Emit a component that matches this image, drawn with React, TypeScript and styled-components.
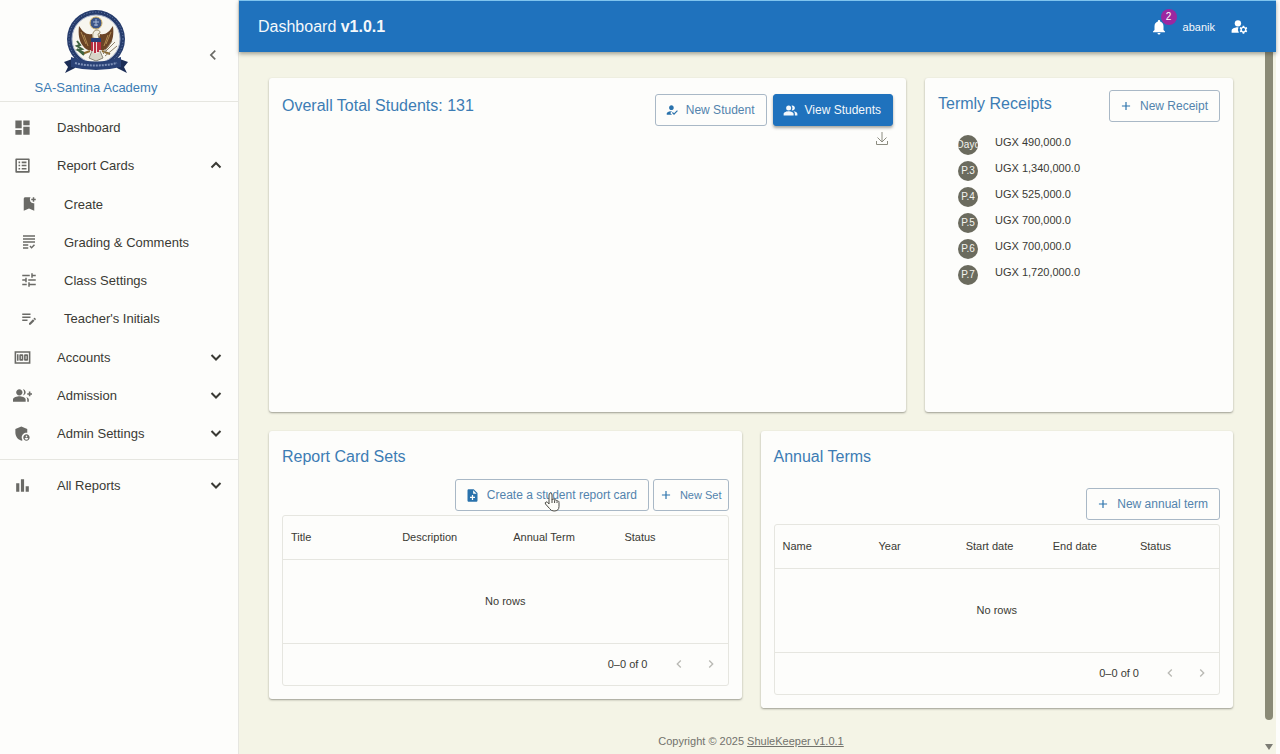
import React from "react";
import styled, { createGlobalStyle } from "styled-components";
import {
  MdAdd,
  MdAdminPanelSettings,
  MdBarChart,
  MdBookmarkAdd,
  MdChevronLeft,
  MdChevronRight,
  MdDashboard,
  MdEditNote,
  MdGrading,
  MdGroupAdd,
  MdHowToReg,
  MdListAlt,
  MdManageAccounts,
  MdMoney,
  MdNoteAdd,
  MdNotifications,
  MdPeopleAlt,
  MdTune,
} from "react-icons/md";

const color = {
  primary: "#1f72bd",
  heading: "#3c7cb4",
  text: "#3a3a34",
  icon: "#6a6a66",
  muted: "#72726c",
  paper: "#fdfdfb",
  page: "#f4f4e6",
  line: "#e6e6e0",
  outline: "#a9b8c6",
};

const GlobalStyle = createGlobalStyle`
  *, *::before, *::after { box-sizing: border-box; }
  body {
    margin: 0;
    background: ${color.paper};
    color: ${color.text};
    font-family: "Liberation Sans", Arial, sans-serif;
    font-size: 11px;
    line-height: 16px;
  }
  button { font-family: inherit; cursor: pointer; }
  h1, h2, p, ul { margin: 0; padding: 0; }
  ul { list-style: none; }
`;

const Shell = styled.div`
  display: flex;
  min-height: 100vh;
`;

const Sidebar = styled.aside`
  flex: 0 0 239px;
  background: ${color.paper};
  border-right: 1px solid ${color.line};
`;

const Brand = styled.div`
  display: grid;
  grid-template-columns: 192px 1fr;
  align-items: center;
  height: 102px;
  border-bottom: 1px solid ${color.line};
`;

const School = styled.div`
  display: flex;
  flex-direction: column;
  align-items: center;
  gap: 6px;
  padding-top: 3px;
  font-size: 13px;
  color: ${color.heading};
`;

const IconButton = styled.button<{ $tone?: string }>`
  display: inline-flex;
  align-items: center;
  justify-content: center;
  padding: 0;
  border: 0;
  background: none;
  color: ${(p) => p.$tone ?? color.icon};
`;

const CollapseButton = styled(IconButton)`
  width: 42px;
  height: 32px;
  margin-top: 8px;
`;

const NavList = styled.ul`
  padding: 6px 0 7px;
  & + & {
    border-top: 1px solid ${color.line};
  }
`;

const SubList = styled.ul`
  padding: 1px 0;
`;

const NavButton = styled.button<{ $nested?: boolean }>`
  display: grid;
  grid-template-columns: 42px 1fr 20px;
  align-items: center;
  width: 100%;
  height: 38px;
  padding: 0 11px 0 ${(p) => (p.$nested ? 22 : 15)}px;
  border: 0;
  background: none;
  color: ${color.text};
  font-size: 13px;
  text-align: left;
  & > svg:first-child {
    color: ${color.icon};
    justify-self: start;
    margin-left: -2px;
  }
`;

const Column = styled.div`
  flex: 1;
  display: flex;
  flex-direction: column;
  min-width: 0;
  margin-right: 4px;
`;

const AppBar = styled.header`
  position: relative;
  display: flex;
  align-items: center;
  justify-content: space-between;
  height: 52px;
  padding: 0 27px 0 19px;
  background: ${color.primary};
  color: #f4f8fb;
  border-top: 1px solid #7fc4ee;
  box-shadow: 0 2px 4px rgba(60, 60, 50, 0.45);
`;

const PageTitle = styled.h1`
  font-size: 16px;
  font-weight: 400;
  line-height: 24px;
`;

const Account = styled.div`
  display: flex;
  align-items: center;
  gap: 15px;
`;

const BellButton = styled(IconButton)`
  position: relative;
`;

const Badge = styled.span`
  position: absolute;
  top: -9px;
  right: -9px;
  width: 16px;
  height: 16px;
  border-radius: 8px;
  background: #9c27a0;
  color: #fff;
  font-size: 10px;
  line-height: 16px;
`;

const Body = styled.div`
  flex: 1;
  display: flex;
  background: ${color.page};
`;

const Content = styled.main`
  flex: 1;
  min-width: 0;
  display: flex;
  flex-direction: column;
  padding: 26px 32px 4px 30px;
`;

const Scroll = styled.div`
  display: flex;
  flex-direction: column;
  align-items: center;
  width: 11px;
  padding-right: 3px;
`;

const Thumb = styled.div`
  flex: 1;
  width: 8px;
  border-radius: 0 0 4px 4px;
  background: #8a8a76;
`;

const ScrollEnd = styled.div`
  display: flex;
  align-items: flex-end;
  height: 34px;
  padding-bottom: 4px;
`;

const Row = styled.div<{ $columns: string }>`
  display: grid;
  grid-template-columns: ${(p) => p.$columns};
  align-items: start;
  gap: 19px;
  & + & {
    margin-top: 19px;
  }
`;

const Card = styled.section<{ $minHeight?: number; $top?: number }>`
  min-width: 0;
  min-height: ${(p) => p.$minHeight ?? 0}px;
  padding: ${(p) => p.$top ?? 12}px 13px 13px;
  border-radius: 3px;
  background: ${color.paper};
  box-shadow: 0 1px 2px rgba(70, 70, 60, 0.5);
`;

const CardHead = styled.div`
  display: flex;
  align-items: flex-start;
  justify-content: space-between;
`;

const CardTitle = styled.h2`
  font-size: 16px;
  font-weight: 400;
  line-height: 28px;
  color: ${color.heading};
`;

const Actions = styled.div<{ $gap?: number; $top?: number; $bottom?: number }>`
  display: flex;
  justify-content: flex-end;
  gap: ${(p) => p.$gap ?? 4}px;
  padding: ${(p) => p.$top ?? 0}px 0 ${(p) => p.$bottom ?? 0}px;
`;

const Button = styled.button<{ $filled?: boolean; $dense?: boolean }>`
  position: relative;
  display: inline-flex;
  align-items: center;
  gap: 7px;
  height: 32px;
  padding: 0 ${(p) => (p.$dense ? 6 : 11)}px 0 ${(p) => (p.$dense ? 5 : 9)}px;
  border: 1px solid ${(p) => (p.$filled ? color.primary : color.outline)};
  border-radius: 3px;
  background: ${(p) => (p.$filled ? color.primary : "transparent")};
  box-shadow: ${(p) => (p.$filled ? "0 2px 3px rgba(60, 60, 50, 0.45)" : "none")};
  color: ${(p) => (p.$filled ? "#f4f8fb" : "#5283ad")};
  font-size: ${(p) => (p.$dense ? 11 : 12)}px;
  line-height: 20px;
  white-space: nowrap;
  & > svg {
    flex: none;
    color: ${(p) => (p.$filled ? "#f4f8fb" : "#2a72ac")};
  }
`;

const Pointer = styled.span`
  position: absolute;
  left: 88px;
  top: 12px;
  width: 16px;
  height: 20px;
`;

const Download = styled.div`
  display: flex;
  justify-content: flex-end;
  padding: 6px 4px 0 0;
`;

const Receipts = styled.ul`
  padding: 12px 0 0 20px;
`;

const Receipt = styled.li`
  display: flex;
  gap: 17px;
  height: 26px;
  font-size: 11px;
  line-height: 16px;
`;

const Avatar = styled.span`
  display: flex;
  align-items: center;
  justify-content: center;
  width: 20px;
  height: 20px;
  margin-top: 1px;
  border-radius: 50%;
  overflow: hidden;
  background: #6b6b5e;
  color: #f4f4ee;
  font-size: 10px;
`;

const Grid = styled.div`
  border: 1px solid ${color.line};
  border-radius: 3px;
`;

const Table = styled.table`
  width: 100%;
  border-collapse: collapse;
  table-layout: fixed;
`;

const HeadCell = styled.th`
  height: 43px;
  padding: 0 8px;
  border-bottom: 1px solid ${color.line};
  font-weight: 400;
  text-align: left;
`;

const EmptyCell = styled.td`
  height: 84px;
  padding: 0;
  border-bottom: 1px solid ${color.line};
  text-align: center;
`;

const Pager = styled.div`
  display: flex;
  align-items: center;
  justify-content: flex-end;
  gap: 16px;
  height: 41px;
  padding-right: 9px;
  & > span {
    margin-right: 7px;
  }
`;

const Footer = styled.footer`
  margin-top: auto;
  padding-top: 20px;
  text-align: center;
  line-height: 18px;
  color: ${color.muted};
  a {
    color: inherit;
  }
`;

const Crest = () => (
  <svg width="66" height="66" viewBox="0 0 66 66" role="img" aria-label="Academy crest">
    <circle cx="33" cy="31" r="29" fill="#263c6c" />
    <circle cx="33" cy="31" r="27" fill="none" stroke="#7289b5" strokeWidth="1" strokeDasharray="1 2" />
    <circle cx="33" cy="31" r="24" fill="#f7f6ef" stroke="#a9b4cc" />
    <path d="M29 26C23 27 20 24 16 18c-1 8 0 15 4 20 3 4 6 5 9 4l2-9zM37 26c6 1 9-2 13-8 1 8 0 15-4 20-3 4-6 5-9 4l-2-9z" fill="#6a4426" />
    <path d="M18 24l5 12M21 27l4 11M48 24l-5 12M45 27l-4 11" stroke="#b08a52" strokeWidth="1" />
    <path d="M29 43h8l3 7-7 3-7-3z" fill="#d8d5c8" stroke="#8a8778" strokeWidth="1" />
    <circle cx="33" cy="15" r="6" fill="#3d5688" stroke="#d2b367" />
    <path d="M30 14h6M31 17h4M33 11v7" stroke="#a9bad9" strokeWidth="1" />
    <path d="M30 30c-1-5 1-8 4-8 2 0 3 1 3 3l-2 1 1 5z" fill="#f1eee0" stroke="#9a8a68" strokeWidth="1" />
    <path d="M28 30h10v10c0 3-3 5-5 6-2-1-5-3-5-6z" fill="#f3dfe0" />
    <path d="M29 34v9M32 34v11M35 34v10M37 34v8" stroke="#b72f42" strokeWidth="2" />
    <path d="M28 30h10v4H28z" fill="#283f78" />
    <path d="M27 43l-8 3M39 43l8 3" stroke="#8b6a2e" strokeWidth="2" />
    <path d="M14 33l3 4-3 1 5 3-4 1 6 3M14 41l7 6" stroke="#3f6340" strokeWidth="2" fill="none" />
    <path d="M52 34L40 46M54 38L42 48M49 33l-8 11" stroke="#8d8069" strokeWidth="1" />
    <path d="M1 54l11-4v10l-10 5 3-6zM65 54l-11-4v10l10 5-3-6z" fill="#1b2d56" />
    <path d="M8 49q25 9 50 0v10q-25 6-50 0z" fill="#2a4276" />
    <path d="M12 55q21 5 42 0" stroke="#7f92b9" strokeWidth="2" strokeDasharray="2 1" fill="none" />
  </svg>
);

const HandCursor = () => (
  <svg width="16" height="20" viewBox="0 0 16 20" aria-hidden="true">
    <path
      d="M5 12V3q0-2 1.500-2T8 3v5q0-1 1.300-1t1.300 1.300Q11 7.500 12 8t1 1.300q.5-.8 1.300-.3t.7 1.500v4q0 4.500-5 4.500-3 0-4.500-2.500L1.500 12q-.8-1.500.5-2t2 .8z"
      fill="#fdfdf8"
      stroke="#4a4a44"
    />
    <path d="M8 8v3M10.600 8.500V11M13 9.500V11" stroke="#4a4a44" />
  </svg>
);

const DownloadIcon = () => (
  <svg width="14" height="14" viewBox="0 0 14 14" fill="none" stroke="currentColor" aria-hidden="true">
    <path d="M7 0v10M2.500 5.500L7 10l4.500-4.500M1.500 9v3.500h11V9" />
  </svg>
);

const Chevron = ({ up }: { up?: boolean }) => (
  <svg width="18" height="18" viewBox="0 0 18 18" fill="none" stroke="currentColor" strokeWidth="2" aria-hidden="true">
    <path d={up ? "M4.500 11.500L9 7l4.500 4.500" : "M4.500 7L9 11.500 13.500 7"} />
  </svg>
);

type NavItem = {
  label: string;
  icon: React.ReactNode;
  expandable?: boolean;
  children?: NavItem[];
};

const mainNav: NavItem[] = [
  { label: "Dashboard", icon: <MdDashboard size={19} /> },
  {
    label: "Report Cards",
    icon: <MdListAlt size={19} />,
    expandable: true,
    children: [
      { label: "Create", icon: <MdBookmarkAdd size={18} /> },
      { label: "Grading & Comments", icon: <MdGrading size={18} /> },
      { label: "Class Settings", icon: <MdTune size={18} /> },
      { label: "Teacher's Initials", icon: <MdEditNote size={18} /> },
    ],
  },
  { label: "Accounts", icon: <MdMoney size={19} />, expandable: true },
  { label: "Admission", icon: <MdGroupAdd size={19} />, expandable: true },
  { label: "Admin Settings", icon: <MdAdminPanelSettings size={19} />, expandable: true },
];

const reportNav: NavItem[] = [
  { label: "All Reports", icon: <MdBarChart size={19} />, expandable: true },
];

const receipts = [
  ["Dayc", "UGX 490,000.0"],
  ["P.3", "UGX 1,340,000.0"],
  ["P.4", "UGX 525,000.0"],
  ["P.5", "UGX 700,000.0"],
  ["P.6", "UGX 700,000.0"],
  ["P.7", "UGX 1,720,000.0"],
];

const Nav = ({ items }: { items: NavItem[] }) => (
  <NavList>
    {items.map((item) => (
      <li key={item.label}>
        <NavButton type="button" aria-expanded={item.expandable ? !!item.children : undefined}>
          {item.icon}
          <span>{item.label}</span>
          {item.expandable && <Chevron up={!!item.children} />}
        </NavButton>
        {item.children && (
          <SubList>
            {item.children.map((child) => (
              <li key={child.label}>
                <NavButton type="button" $nested>
                  {child.icon}
                  <span>{child.label}</span>
                </NavButton>
              </li>
            ))}
          </SubList>
        )}
      </li>
    ))}
  </NavList>
);

const DataGrid = ({ columns, firstWidth }: { columns: string[]; firstWidth?: number }) => (
  <Grid>
    <Table>
      <colgroup>
        {columns.map((name, i) => (
          <col key={name} width={i === 0 ? firstWidth : undefined} />
        ))}
      </colgroup>
      <thead>
        <tr>
          {columns.map((name) => (
            <HeadCell key={name} scope="col">
              {name}
            </HeadCell>
          ))}
        </tr>
      </thead>
      <tbody>
        <tr>
          <EmptyCell colSpan={columns.length}>No rows</EmptyCell>
        </tr>
      </tbody>
    </Table>
    <Pager>
      <span>0–0 of 0</span>
      <IconButton type="button" aria-label="Previous page" $tone="#b9b9b4">
        <MdChevronLeft size={16} />
      </IconButton>
      <IconButton type="button" aria-label="Next page" $tone="#b9b9b4">
        <MdChevronRight size={16} />
      </IconButton>
    </Pager>
  </Grid>
);

export default function App() {
  return (
    <>
      <GlobalStyle />
      <Shell>
        <Sidebar>
          <Brand>
            <School>
              <Crest />
              <span>SA-Santina Academy</span>
            </School>
            <CollapseButton type="button" aria-label="Collapse menu">
              <MdChevronLeft size={20} />
            </CollapseButton>
          </Brand>
          <nav>
            <Nav items={mainNav} />
            <Nav items={reportNav} />
          </nav>
        </Sidebar>
        <Column>
          <AppBar>
            <PageTitle>
              Dashboard <strong>v1.0.1</strong>
            </PageTitle>
            <Account>
              <BellButton type="button" aria-label="Notifications" $tone="#fff">
                <MdNotifications size={18} />
                <Badge>2</Badge>
              </BellButton>
              <span>abanik</span>
              <IconButton type="button" aria-label="Account settings" $tone="#fff">
                <MdManageAccounts size={19} />
              </IconButton>
            </Account>
          </AppBar>
          <Body>
            <Content>
              <Row $columns="2fr minmax(0, 308px)">
                <Card $minHeight={334} $top={14}>
                  <CardHead>
                    <CardTitle>Overall Total Students: 131</CardTitle>
                    <Actions $gap={6} $top={2}>
                      <Button type="button">
                        <MdHowToReg size={14} />
                        New Student
                      </Button>
                      <Button type="button" $filled>
                        <MdPeopleAlt size={15} />
                        View Students
                      </Button>
                    </Actions>
                  </CardHead>
                  <Download>
                    <IconButton type="button" aria-label="Download chart" $tone="#8c8c80">
                      <DownloadIcon />
                    </IconButton>
                  </Download>
                </Card>
                <Card $minHeight={334} $top={12}>
                  <CardHead>
                    <CardTitle>Termly Receipts</CardTitle>
                    <Button type="button">
                      <MdAdd size={14} />
                      New Receipt
                    </Button>
                  </CardHead>
                  <Receipts>
                    {receipts.map(([group, amount]) => (
                      <Receipt key={group}>
                        <Avatar>{group}</Avatar>
                        {amount}
                      </Receipt>
                    ))}
                  </Receipts>
                </Card>
              </Row>
              <Row $columns="1fr 1fr">
                <Card>
                  <CardTitle>Report Card Sets</CardTitle>
                  <Actions $top={8} $bottom={4}>
                    <Button type="button">
                      <MdNoteAdd size={15} />
                      Create a student report card
                      <Pointer>
                        <HandCursor />
                      </Pointer>
                    </Button>
                    <Button type="button" $dense>
                      <MdAdd size={14} />
                      New Set
                    </Button>
                  </Actions>
                  <DataGrid columns={["Title", "Description", "Annual Term", "Status"]} />
                </Card>
                <Card>
                  <CardTitle>Annual Terms</CardTitle>
                  <Actions $top={17} $bottom={4}>
                    <Button type="button">
                      <MdAdd size={14} />
                      New annual term
                    </Button>
                  </Actions>
                  <DataGrid columns={["Name", "Year", "Start date", "End date", "Status"]} firstWidth={96} />
                </Card>
              </Row>
              <Footer>
                Copyright © 2025 <a href="#shulekeeper">ShuleKeeper v1.0.1</a>
              </Footer>
            </Content>
            <Scroll aria-hidden="true">
              <Thumb />
              <ScrollEnd>
                <svg width="8" height="6" viewBox="0 0 8 6">
                  <path d="M0 0h8L4 6z" fill="#7c7c74" />
                </svg>
              </ScrollEnd>
            </Scroll>
          </Body>
        </Column>
      </Shell>
    </>
  );
}
